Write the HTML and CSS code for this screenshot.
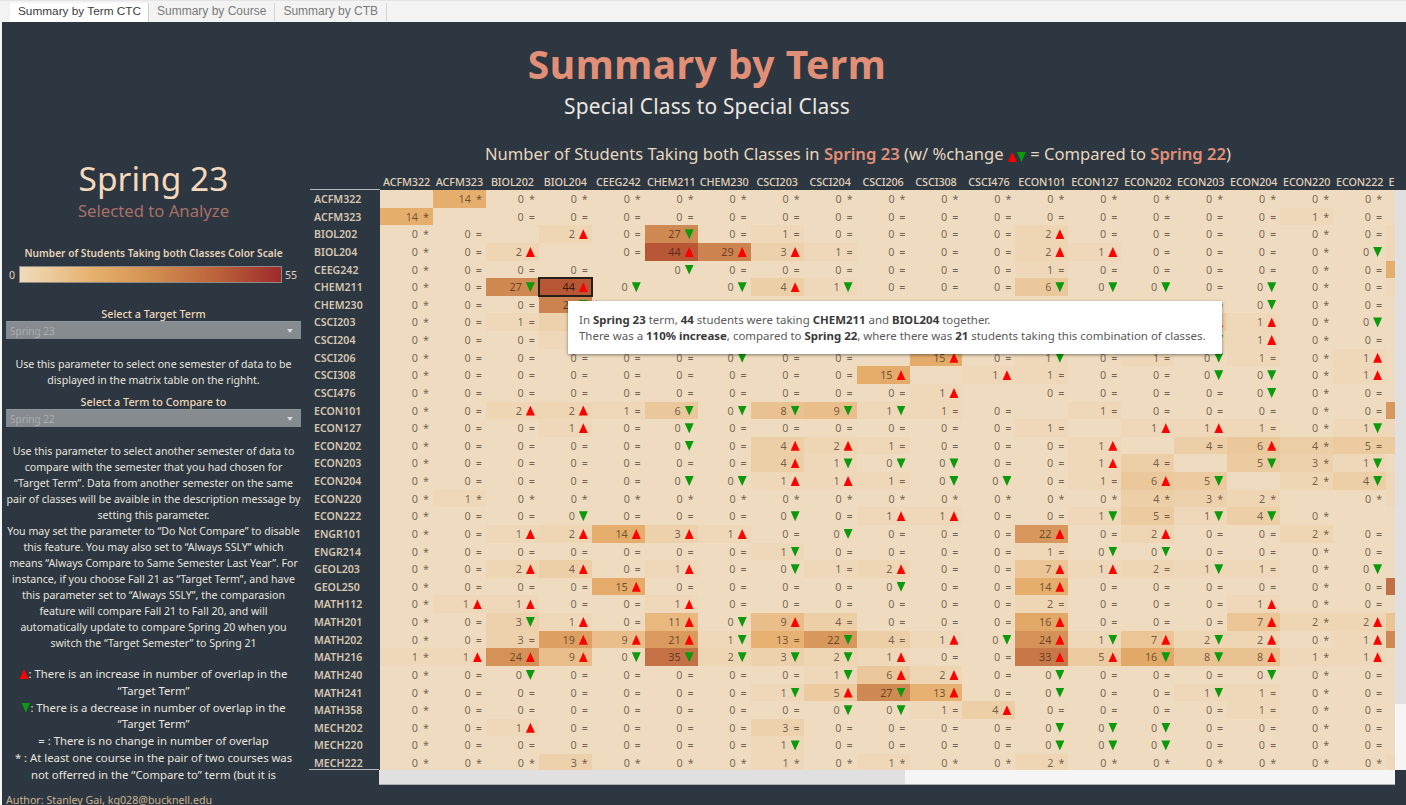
FILE: index.html
```html
<!DOCTYPE html>
<html lang="en">
<head>
<meta charset="utf-8">
<title>Summary by Term CTC</title>
<link rel="stylesheet" href="styles.css">
</head>
<body>
<div class="app">
  <nav class="tabs">
    <span class="tab active">Summary by Term CTC</span>
    <span class="tab">Summary by Course</span>
    <span class="tab">Summary by CTB</span>
  </nav>
  <div class="dash">
    <header class="head">
      <h1>Summary by Term</h1>
      <h2>Special Class to Special Class</h2>
    </header>
    <div class="body">
      <aside class="side">
        <div class="term">Spring 23</div>
        <div class="term-sub">Selected to Analyze</div>
        <div class="scale-title">Number of Students Taking both Classes Color Scale</div>
        <div class="scale"><span>0</span><div class="scale-bar"></div><span>55</span></div>
        <div class="label first">Select a Target Term</div>
        <div class="select"><span>Spring 23</span><i class="caret"></i></div>
        <p class="note n1">Use this parameter to select one semester of data to be<br>displayed in the matrix table on the righht.</p>
        <div class="label">Select a Term to Compare to</div>
        <div class="select"><span>Spring 22</span><i class="caret"></i></div>
        <p class="note n2">Use this parameter to select another semester of data to<br>compare with the semester that you had chosen for<br>“Target Term”. Data from another semester on the same<br>pair of classes will be avaible in the description message by<br>setting this parameter.<br>You may set the parameter to “Do Not Compare” to disable<br>this feature. You may also set to “Always SSLY” which<br>means “Always Compare to Same Semester Last Year”. For<br>instance, if you choose Fall 21 as “Target Term”, and have<br>this parameter set to “Always SSLY”, the comparasion<br>feature will compare Fall 21 to Fall 20, and will<br>automatically update to compare Spring 20 when you<br>switch the “Target Semester” to Spring 21</p>
        <p class="note key"><i class="up big"></i>: There is an increase in number of overlap in the<br>“Target Term”<br><i class="down big"></i>: There is a decrease in number of overlap in the<br>“Target Term”<br>= : There is no change in number of overlap<br>* : At least one course in the pair of two courses was<br>not offerred in the “Compare to” term (but it is</p>
        <div class="author">Author: Stanley Gai, kg028@bucknell.edu</div>
      </aside>
      <main class="main">
        <div class="chart-title">Number of Students Taking both Classes in <b>Spring 23</b> (w/ %change <i class="up small"></i><i class="down small"></i> = Compared to <b>Spring 22</b>)</div>
        <div class="viewport">
          <div class="matrix" id="matrix"></div>
          <div class="vbar"></div>
          <div class="hbar"></div>
          <div class="tooltip">In <b>Spring 23</b> term, <b>44</b> students were taking <b>CHEM211</b> and <b>BIOL204</b> together.<br>There was a <b>110% increase</b>, compared to <b>Spring 22</b>, where there was <b>21</b> students taking this combination of classes.</div>
        </div>
      </main>
    </div>
  </div>
</div>
<script src="matrix.js"></script>
</body>
</html>
```
FILE: styles.css
```css
* { box-sizing: border-box; }
html, body { margin: 0; height: 100%; overflow: hidden; background: #f5f5f5; }
body { font-family: "Noto Sans", "Open Sans", sans-serif; }
.app { width: 1406px; height: 805px; display: flex; flex-direction: column; overflow: hidden; }

.tabs { height: 22px; flex: none; display: flex; padding: 2px 0 0 10px; background: #f3f3f3; border-top: 1px solid #e4e4e4; font: 12px/16px "Liberation Sans", Arial, sans-serif; }
.tab { padding: 0 8px; color: #7a7a7a; border-right: 1px solid #d4d4d4; white-space: nowrap; height: 18px; }
.tab.active { background: #fff; color: #3c3c3c; border-right: 1px solid #cfcfcf; font-size: 11.8px; padding: 0 7px 0 8px; height: 19px; }

.dash { flex: 1; margin-left: 2px; background: #2d3741; display: flex; flex-direction: column; min-height: 0; }
.head { height: 108px; flex: none; text-align: center; padding-left: 6px; }
h1 { margin: 0; padding-top: 14px; font-size: 39px; line-height: 56px; font-weight: 700; color: #e28f78; letter-spacing: .5px; }
h2 { margin: 0; font-size: 20.9px; line-height: 28px; font-weight: 400; color: #ece7e0; letter-spacing: .2px; }

.body { flex: 1; display: flex; min-height: 0; }
.side { width: 303px; margin-right: 5px; flex: none; text-align: center; color: #e8e4de; overflow: hidden; white-space: nowrap; padding-top: 26px; }
.term { font-size: 33.5px; line-height: 44px; color: #f6d9bc; }
.term-sub { font-size: 16.7px; line-height: 22px; color: #a86f66; }
.scale-title { margin-top: 23px; font-size: 10.2px; line-height: 16px; font-weight: 600; color: #e6d3ba; }
.scale { display: flex; align-items: center; gap: 3.5px; margin-top: 5px; padding-left: 7px; height: 17px; font-size: 10.5px; color: #e6d3ba; }
.scale-bar { width: 263px; height: 17px; border: 1px solid #8d8a86; background: linear-gradient(90deg, #f0dcbc 0%, #e6b26f 27%, #d89856 45%, #b95d39 78%, #9e2a2c 100%); }
.label { font-size: 10.8px; line-height: 15px; font-weight: 500; color: #eed6b8; }
.label.first { margin-top: 23px; }
.select { display: flex; align-items: center; justify-content: space-between; margin: 0 4px; height: 18px; padding: 0 8px 0 4px; background: #868b8f; color: #a9adb0; font-size: 10px; line-height: 18px; text-align: left; border-top: 1px solid #8f9497; }
.caret { width: 0; height: 0; border: 3px solid transparent; border-top: 4px solid #d6d8da; border-bottom: 0; }
.note { margin: 0; font-size: 10.6px; line-height: 16px; color: #e8e4de; }
.n1 { margin: 17px 0 6px; }
.n2 { margin: 16px 0 0; }
.key { margin-top: 15px; font-size: 11.3px; line-height: 16.75px; }
.author { margin-top: 12px; text-align: left; padding-left: 4px; font-size: 10.7px; line-height: 10px; color: #cdb592; }

.up, .down { display: inline-block; vertical-align: -1px; }
.up { background: #f00; clip-path: polygon(50% 0, 100% 100%, 0 100%); }
.down { background: #0b9a0b; clip-path: polygon(0 0, 100% 0, 50% 100%); }
.big { width: 9px; height: 10px; }
.small { width: 9px; height: 10px; vertical-align: -2px; }

.main { flex: 1; min-width: 0; display: flex; flex-direction: column; }
.chart-title { text-align: center; font-size: 16.6px; line-height: 24px; height: 24px; margin-top: 12px; color: #e8d6bf; white-space: nowrap; }
.chart-title b { color: #e28f78; font-weight: 600; }

.viewport { position: relative; flex: 1; margin-top: 6px; }
.matrix { display: grid; grid-template-columns: 70px repeat(19, 52.96px) 10.5px; grid-template-rows: 18px repeat(33, 17.64px); height: 598px; overflow: hidden; font-size: 10.8px; }
.col { color: #e0d2bd; font-weight: 500; line-height: 19px; text-align: center; white-space: nowrap; letter-spacing: -.1px; }
.corner { border-bottom: 1px solid #b4b9bd; }
.rowh { color: #d5c6b1; font-weight: 600; padding-top: 1px; line-height: 16.64px; padding-left: 4px; white-space: nowrap; font-size: 10.6px; }
.cell { text-align: right; padding: 1px 4px 0 0; line-height: 16.64px; color: rgba(30, 20, 10, .62); white-space: nowrap; overflow: hidden; position: relative; }
.cell .mark { margin-left: 5px; }
.cell .up, .cell .down { width: 9px; height: 10px; margin-left: 4px; vertical-align: -1px; }
.cell.sel { outline: 2px solid #26201c; outline-offset: -1px; z-index: 1; color: rgba(20, 10, 5, .8); }

.vbar { position: absolute; right: 0; top: 18px; width: 11px; height: 580px; background: linear-gradient(#e0e0e0 514px, #f5f5f5 514px); }
.hbar { position: absolute; left: 69px; top: 598px; width: 1016px; height: 15px; border-bottom: 1px solid #aab0b4; background: linear-gradient(90deg, #e0e0e0 526px, #f5f5f5 526px); }
.hbar::before { content: ""; position: absolute; left: -70px; top: -1px; width: 70px; height: 1px; background: #b4b9bd; }
.tooltip { position: absolute; left: 258px; top: 129px; width: 654px; height: 53px; padding: 11px 11px; background: #fff; box-shadow: 0 1px 3px rgba(0,0,0,.45); color: #5a5a5a; font-size: 11.44px; line-height: 16px; white-space: nowrap; }
.tooltip b { color: #3a3a3a; font-weight: 700; }
```
FILE: matrix.js
```js
var cols = "ACFM322 ACFM323 BIOL202 BIOL204 CEEG242 CHEM211 CHEM230 CSCI203 CSCI204 CSCI206 CSCI308 CSCI476 ECON101 ECON127 ECON202 ECON203 ECON204 ECON220 ECON222".split(" ");
var rows = [
["ACFM322","_ 14* 0* 0* 0* 0* 0* 0* 0* 0* 0* 0* 0* 0* 0* 0* 0* 0* 0*",0],
["ACFM323","14* _ 0e 0e 0e 0e 0e 0e 0e 0e 0e 0e 0e 0e 0e 0e 0e 1* 0e",0],
["BIOL202","0* 0e _ 2u 0e 27d 0e 1e 0e 0e 0e 0e 2u 0e 0e 0e 0e 0* 0e",1],
["BIOL204","0* 0e 2u _ 0e 44u 29u 3u 1e 0e 0e 0e 2u 1u 0e 0e 0e 0* 0d",1],
["CEEG242","0* 0e 0e 0e _ 0d 0e 0e 0e 0e 0e 0e 1e 0e 0e 0e 0e 0* 0e",14],
["CHEM211","0* 0e 27d 44u 0d _ 0d 4u 1d 0e 0e 0e 6d 0d 0d 0e 0d 0* 0e",1],
["CHEM230","0* 0e 0e 29d 0e 0e _ 0e 0e 0e 0e 0e 0e 0e 0e 0e 0d 0* 0e",0],
["CSCI203","0* 0e 1e 3u 0e 4u 0e _ 0e 0e 0e 0e 8d 0e 4u 4u 1u 0* 0d",0],
["CSCI204","0* 0e 0e 1e 0e 1d 0e 0e _ 0e 0e 0e 9d 0e 2u 1d 1u 0* 0e",0],
["CSCI206","0* 0e 0e 0e 0e 0e 0d 0e 0e _ 15u 0e 1d 0e 1e 0d 1e 0* 1u",0],
["CSCI308","0* 0e 0e 0e 0e 0e 0e 0e 0e 15u _ 1u 1e 0e 0e 0d 0d 0* 1u",0],
["CSCI476","0* 0e 0e 0e 0e 0e 0e 0e 0e 0e 1u _ 0e 0e 0e 0e 0d 0* 0e",0],
["ECON101","0* 0e 2u 2u 1e 6d 0d 8d 9d 1d 1e 0e _ 1e 0e 0e 0e 0* 0e",22],
["ECON127","0* 0e 0e 1u 0e 0d 0e 0e 0e 0e 0e 0e 1e _ 1u 1u 1e 0* 1d",1],
["ECON202","0* 0e 0e 0e 0e 0d 0e 4u 2u 1e 0e 0e 0e 1u _ 4e 6u 4* 5e",5],
["ECON203","0* 0e 0e 0e 0e 0e 0e 4u 1d 0d 0d 0e 0e 1u 4e _ 5d 3* 1d",0],
["ECON204","0* 0e 0e 0e 0e 0d 0d 1u 1u 1e 0d 0d 0e 1e 6u 5d _ 2* 4d",1],
["ECON220","0* 1* 0* 0* 0* 0* 0* 0* 0* 0* 0* 0* 0* 0* 4* 3* 2* _ 0*",1],
["ECON222","0* 0e 0e 0d 0e 0e 0e 0d 0e 1u 1u 0e 0e 1d 5e 1d 4d 0* _",0],
["ENGR101","0* 0e 1u 2u 14u 3u 1u 0e 0d 0e 0e 0e 22u 0e 2u 0e 0e 2* 0e",0],
["ENGR214","0* 0e 0e 0e 0e 0e 0e 1d 0e 0e 0e 0e 1e 0d 0d 0e 0e 0* 0e",0],
["GEOL203","0* 0e 2u 4u 0e 1u 0e 0d 1e 2u 0e 0e 7u 1u 2e 1d 1e 0* 0d",0],
["GEOL250","0* 0e 0e 0e 15u 0e 0e 0e 0e 0d 0e 0e 14u 0e 0e 0e 0e 0* 0e",36],
["MATH112","0* 1u 1u 0e 0e 1u 0e 0e 0e 0e 0e 0e 2e 0e 0e 0e 1u 0* 0e",0],
["MATH201","0* 0e 3d 1u 0e 11u 0d 9u 4e 0e 0e 0e 16u 0e 0e 0e 7u 2* 2u",7],
["MATH202","0* 0e 3e 19u 9u 21u 1d 13e 22d 4e 1u 0d 24u 1d 7u 2d 2u 0* 1u",27],
["MATH216","1* 1u 24u 9u 0d 35d 2d 3d 2d 1u 0e 0e 33u 5u 16d 8d 8u 1* 1u",0],
["MATH240","0* 0e 0d 0e 0e 0e 0e 0e 1d 6u 2u 0e 0d 0e 0e 0e 0d 0* 0e",0],
["MATH241","0* 0e 0e 0e 0e 0e 0e 1d 5u 27d 13u 0e 0d 0e 0e 1d 1e 0* 0e",0],
["MATH358","0* 0e 0e 0e 0e 0e 0e 0e 0d 0d 1e 4u 0e 0e 0e 0e 1e 0* 0e",0],
["MECH202","0* 0e 1u 0e 0e 0e 0e 3e 0e 0e 0e 0e 0d 0d 0d 0e 0e 0* 0e",0],
["MECH220","0* 0e 0e 0e 0e 0e 0e 1d 0e 0e 0e 0e 0d 0d 0d 0e 0e 0* 0e",0],
["MECH222","0* 0* 0* 3* 0* 0* 0* 1* 0* 1* 0* 0* 2* 0* 0* 0* 0* 0* 0*",1]
];
var stops = [[0,239,219,191],[14,230,174,108],[27,207,137,82],[44,183,87,54],[55,160,44,44]];
function heat(v) {
  for (var i = 1; i < stops.length; i++) {
    if (v <= stops[i][0]) {
      var a = stops[i - 1], b = stops[i], t = (v - a[0]) / (b[0] - a[0]);
      return "rgb(" + [1, 2, 3].map(function (k) { return Math.round(a[k] + (b[k] - a[k]) * t); }).join(",") + ")";
    }
  }
}
function el(cls, text) {
  var d = document.createElement("div");
  d.className = cls;
  if (text) d.textContent = text;
  return d;
}
var m = document.getElementById("matrix");
m.appendChild(el("col corner"));
cols.forEach(function (c) { m.appendChild(el("col", c)); });
m.appendChild(el("col", "E"));
rows.forEach(function (r, ri) {
  m.appendChild(el("rowh", r[0]));
  r[1].split(" ").forEach(function (tok, ci) {
    var c = el("cell");
    var match = tok.match(/^(\d+)(.)$/);
    var v = 0;
    if (match) {
      v = +match[1];
      c.appendChild(document.createTextNode(match[1]));
      var k = match[2];
      if (k === "u" || k === "d") {
        var i = document.createElement("i");
        i.className = k === "u" ? "up" : "down";
        c.appendChild(i);
      } else {
        var s = document.createElement("span");
        s.className = "mark";
        s.textContent = k === "e" ? "=" : "*";
        c.appendChild(s);
      }
    }
    c.style.background = heat(v);
    if (ri === 5 && ci === 3) c.className += " sel";
    m.appendChild(c);
  });
  var p = el("cell");
  p.style.background = heat(r[2]);
  m.appendChild(p);
});
```
